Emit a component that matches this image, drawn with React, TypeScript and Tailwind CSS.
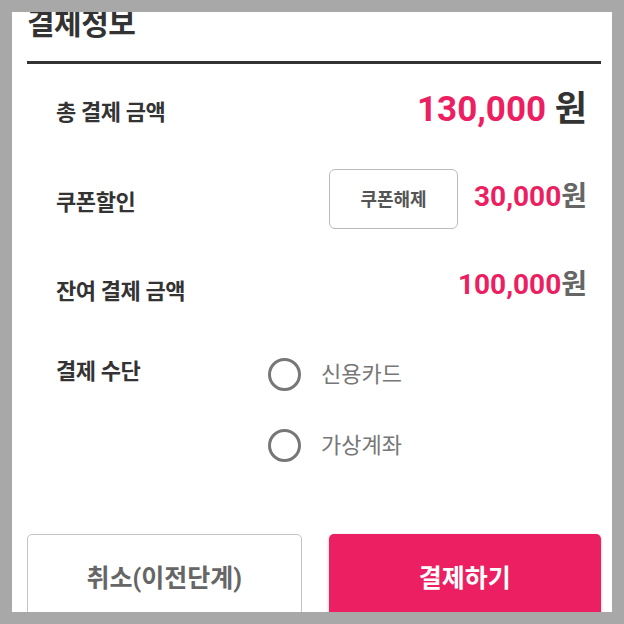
import React from 'react';

const FONT = 'font-["Roboto","Noto_Sans_CJK_KR",sans-serif]';

const Radio: React.FC<{ label: string }> = ({ label }) => (
  <label className="flex items-center h-[34px]">
    <span className="w-[33px] h-[33px] rounded-full border-[3px] border-[#777] bg-white" />
    <span className="ml-[20px] text-[22px] text-[#777]">{label}</span>
  </label>
);

export default function App() {
  return (
    <div className={`w-[624px] h-[624px] bg-[#a8a8a8] p-3 ${FONT}`}>
      <div className="h-[600px] bg-white overflow-hidden pl-[15px] pr-[11px]">
        <h2 className="-mt-[8px] h-[57px] text-[30px] leading-[40px] font-bold text-[#333] tracking-[-0.5px]">
          결제정보
        </h2>
        <div className="border-b-[3px] border-[#333]" />

        <div className="pl-[29px] pr-[14px] pt-[3px]">
          <div className="flex items-center justify-between h-[91px]">
            <span className="text-[22px] font-bold text-[#333] tracking-[-0.4px]">총 결제 금액</span>
            <span className="text-[35px] font-bold leading-none -mt-[7px]">
              <span className="text-[#eb1f61]">130,000</span>
              <span className="text-[#333]"> 원</span>
            </span>
          </div>

          <div className="flex items-center justify-between h-[88px]">
            <span className="text-[22px] font-bold text-[#333] tracking-[-0.4px]">쿠폰할인</span>
            <div className="flex items-center gap-4">
              <button className="w-[129px] h-[60px] mb-[6px] rounded-[6px] border-[1.5px] border-[#bbb] bg-white text-[18px] font-bold text-[#555]">
                쿠폰해제
              </button>
              <span className="text-[28px] font-bold leading-none -mt-[10px]">
                <span className="text-[#eb1f61]">30,000</span>
                <span className="text-[#666]">원</span>
              </span>
            </div>
          </div>

          <div className="flex items-center justify-between h-[90px]">
            <span className="text-[22px] font-bold text-[#333] tracking-[-0.4px]">잔여 결제 금액</span>
            <span className="text-[28px] font-bold leading-none -mt-[13px]">
              <span className="text-[#eb1f61]">100,000</span>
              <span className="text-[#666]">원</span>
            </span>
          </div>

          <div className="flex pt-[20px]">
            <span className="w-[212px] text-[22px] font-bold text-[#333] tracking-[-0.4px] leading-[32px]">
              결제 수단
            </span>
            <div className="flex flex-col gap-[37px] pt-[1px]">
              <Radio label="신용카드" />
              <Radio label="가상계좌" />
            </div>
          </div>
        </div>

        <div className="flex gap-[27px] mt-[72px]">
          <button className="flex-1 h-[90px] rounded-[5px] border-[1.5px] border-[#c4c4c4] bg-white text-[25px] font-bold text-[#666]">
            취소(이전단계)
          </button>
          <button className="flex-1 h-[90px] rounded-[5px] bg-[#eb1f61] text-[25px] font-bold text-white shadow-[0_1px_3px_rgba(0,0,0,0.25)]">
            결제하기
          </button>
        </div>
      </div>
    </div>
  );
}
